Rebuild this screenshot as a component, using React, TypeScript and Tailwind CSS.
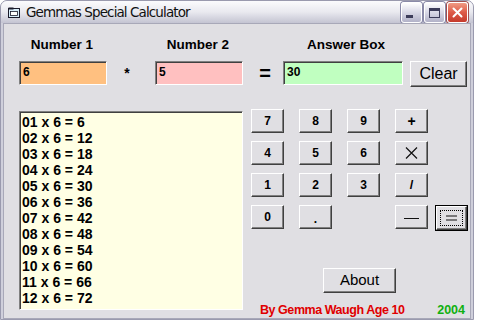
import type { ReactNode } from "react"

const font = "font-['Liberation_Sans',Arial,sans-serif]"

// classic raised 3D button
function Btn({ children, className = "" }: { children: ReactNode; className?: string }) {
  return (
    <div
      className={`flex items-center justify-center bg-[#e0dfe3] border border-t-white border-l-white border-r-[#404040] border-b-[#404040] shadow-[inset_-1px_-1px_0_#808080] text-black ${className}`}
    >
      {children}
    </div>
  )
}

// sunken text box
function Field({ value, bg, w }: { value: string; bg: string; w: string }) {
  return (
    <div
      className={`${w} h-[24px] ${bg} border border-t-[#808080] border-l-[#808080] border-r-white border-b-white shadow-[inset_1px_1px_0_#404040] px-[3px] pt-[2px] text-[12px] font-bold leading-[16px] text-black`}
    >
      {value}
    </div>
  )
}

function TitleButton({ kind }: { kind: "min" | "max" | "close" }) {
  if (kind === "close") {
    return (
      <div className="w-[21px] h-[21px] rounded-[3px] border border-white bg-gradient-to-b from-[#f09a84] via-[#dd5a48] to-[#c53a2c] flex items-center justify-center shadow-[0_0_0_1px_#a05050]">
        <svg width="11" height="11" viewBox="0 0 11 11">
          <path d="M1.5 1.5 L9.5 9.5 M9.5 1.5 L1.5 9.5" stroke="white" strokeWidth="2" strokeLinecap="round" />
        </svg>
      </div>
    )
  }
  return (
    <div className="w-[21px] h-[21px] rounded-[3px] border border-white bg-gradient-to-b from-[#ffffff] via-[#d8d8e6] to-[#b2b2c8] flex items-center justify-center shadow-[0_0_0_1px_#8a8aa8]">
      {kind === "min" ? (
        <div className="w-[7px] h-[3px] bg-[#3c3c5a] mt-[8px] -ml-[4px]" />
      ) : (
        <div className="w-[11px] h-[10px] border border-[#3c3c5a] border-t-[3px]" />
      )}
    </div>
  )
}

const rows = [1, 2, 3, 4, 5, 6, 7, 8, 9, 10, 11, 12]

export default function App() {
  return (
    <div className={`w-[477px] h-[322px] bg-white ${font}`}>
      <div className="w-[474px] h-[320px] flex flex-col bg-[#cfcfdb] rounded-t-[7px] overflow-hidden border border-[#9a9aae]">
        {/* title bar */}
        <div className="h-[28px] flex items-center px-[6px] bg-gradient-to-b from-[#fbfbfd] via-[#e9e9ef] to-[#c4c4d2]">
          <svg width="12" height="11" viewBox="0 0 12 11" className="ml-[1px] mt-[1px]">
            <rect x="0.5" y="1.5" width="11" height="9" fill="#d8eefa" stroke="#1a1a2a" />
            <rect x="0.5" y="0.5" width="5" height="2" fill="#1a1a2a" />
            <rect x="2.5" y="4.5" width="7" height="4" fill="#fff" stroke="#1a1a2a" strokeWidth="0.8" />
          </svg>
          <span className="ml-[6px] text-[13.5px] text-[#111] font-['DejaVu_Sans',sans-serif] tracking-[-0.9px]">Gemmas Special Calculator</span>
          <div className="ml-auto flex gap-[2px] mr-[-1px] mt-[1px]">
            <TitleButton kind="min" />
            <TitleButton kind="max" />
            <TitleButton kind="close" />
          </div>
        </div>

        {/* window body */}
        <div className="flex-1 mx-[2px] mb-[2px] bg-[#e0dfe3] border border-[#a8a8b8] pl-[15px]">
          {/* labels */}
          <div className="flex mt-[13px] h-[16px] text-[13.5px] font-bold leading-[16px] text-black">
            <div className="w-[88px] text-center -ml-[1px]">Number 1</div>
            <div className="w-[48px]" />
            <div className="w-[88px] text-center">Number 2</div>
            <div className="w-[40px]" />
            <div className="w-[120px] text-center ml-[4px]">Answer Box</div>
          </div>

          {/* inputs */}
          <div className="flex items-start mt-[8px]">
            <Field value="6" bg="bg-[#ffc080]" w="w-[88px]" />
            <div className="w-[48px] h-[24px] flex items-center justify-center pr-[8px] text-[14px] font-bold">*</div>
            <Field value="5" bg="bg-[#ffc0c0]" w="w-[88px]" />
            <div className="w-[40px] h-[24px] flex items-center justify-center pl-[4px] text-[20px] font-bold">=</div>
            <Field value="30" bg="bg-[#c0ffc0]" w="w-[120px]" />
            <Btn className="ml-[7px] w-[57px] h-[26px] text-[16px]">Clear</Btn>
          </div>

          {/* lower area */}
          <div className="flex items-start mt-[22px]">
            <div className="mt-[2px] w-[224px] h-[199px] bg-[#ffffe4] border border-t-[#808080] border-l-[#808080] border-r-white border-b-white shadow-[inset_1px_1px_0_#404040] pl-[2px] pt-[2px] text-[14px] font-bold leading-[16px] text-black">
              {rows.map((n) => (
                <div key={n}>
                  {String(n).padStart(2, "0")} x 6 = {n * 6}
                </div>
              ))}
            </div>

            <div className="ml-[8px] flex flex-col">
              <div className="flex flex-col gap-[8px] text-[12px] font-bold">
                <div className="flex gap-[15px]">
                  <Btn className="w-[33px] h-[24px]">7</Btn>
                  <Btn className="w-[33px] h-[24px]">8</Btn>
                  <Btn className="w-[33px] h-[24px]">9</Btn>
                  <Btn className="w-[33px] h-[24px] text-[14px]">+</Btn>
                </div>
                <div className="flex gap-[15px]">
                  <Btn className="w-[33px] h-[24px]">4</Btn>
                  <Btn className="w-[33px] h-[24px]">5</Btn>
                  <Btn className="w-[33px] h-[24px]">6</Btn>
                  <Btn className="w-[33px] h-[24px]">
                    <svg width="13" height="12" viewBox="0 0 13 12">
                      <path d="M1 0.5 L12 11.5 M12 0.5 L1 11.5" stroke="#111" strokeWidth="1.2" />
                    </svg>
                  </Btn>
                </div>
                <div className="flex gap-[15px]">
                  <Btn className="w-[33px] h-[24px]">1</Btn>
                  <Btn className="w-[33px] h-[24px]">2</Btn>
                  <Btn className="w-[33px] h-[24px]">3</Btn>
                  <Btn className="w-[33px] h-[24px] text-[13px]">/</Btn>
                </div>
                <div className="flex items-start">
                  <Btn className="w-[33px] h-[24px]">0</Btn>
                  <Btn className="ml-[15px] w-[33px] h-[24px] pt-[4px]">.</Btn>
                  <div className="ml-[15px] w-[33px]" />
                  <Btn className="ml-[15px] w-[33px] h-[24px]">
                    <div className="w-[15px] h-[1px] bg-[#111] mt-[3px]" />
                  </Btn>
                  <div className="ml-[7px] w-[33px] h-[26px] border border-black">
                    <Btn className="w-full h-full">
                      <div className="w-[23px] h-[16px] border border-dotted border-black flex items-center justify-center">
                        <svg width="11" height="6" viewBox="0 0 11 6">
                          <path d="M0 1 H11 M0 5 H11" stroke="#111" strokeWidth="1" />
                        </svg>
                      </div>
                    </Btn>
                  </div>
                </div>
              </div>

              <Btn className="mt-[37px] ml-[72px] w-[73px] h-[25px] text-[15px]">About</Btn>

              <div className="flex mt-[10px] ml-[9px] h-[15px] items-center text-[12.5px] font-bold leading-[15px]">
                <span className="text-[#e00000] tracking-[-0.45px]">By Gemma Waugh Age 10</span>
                <span className="ml-auto mr-[3px] text-[#10b010]">2004</span>
              </div>
            </div>
          </div>
        </div>
      </div>
    </div>
  )
}
